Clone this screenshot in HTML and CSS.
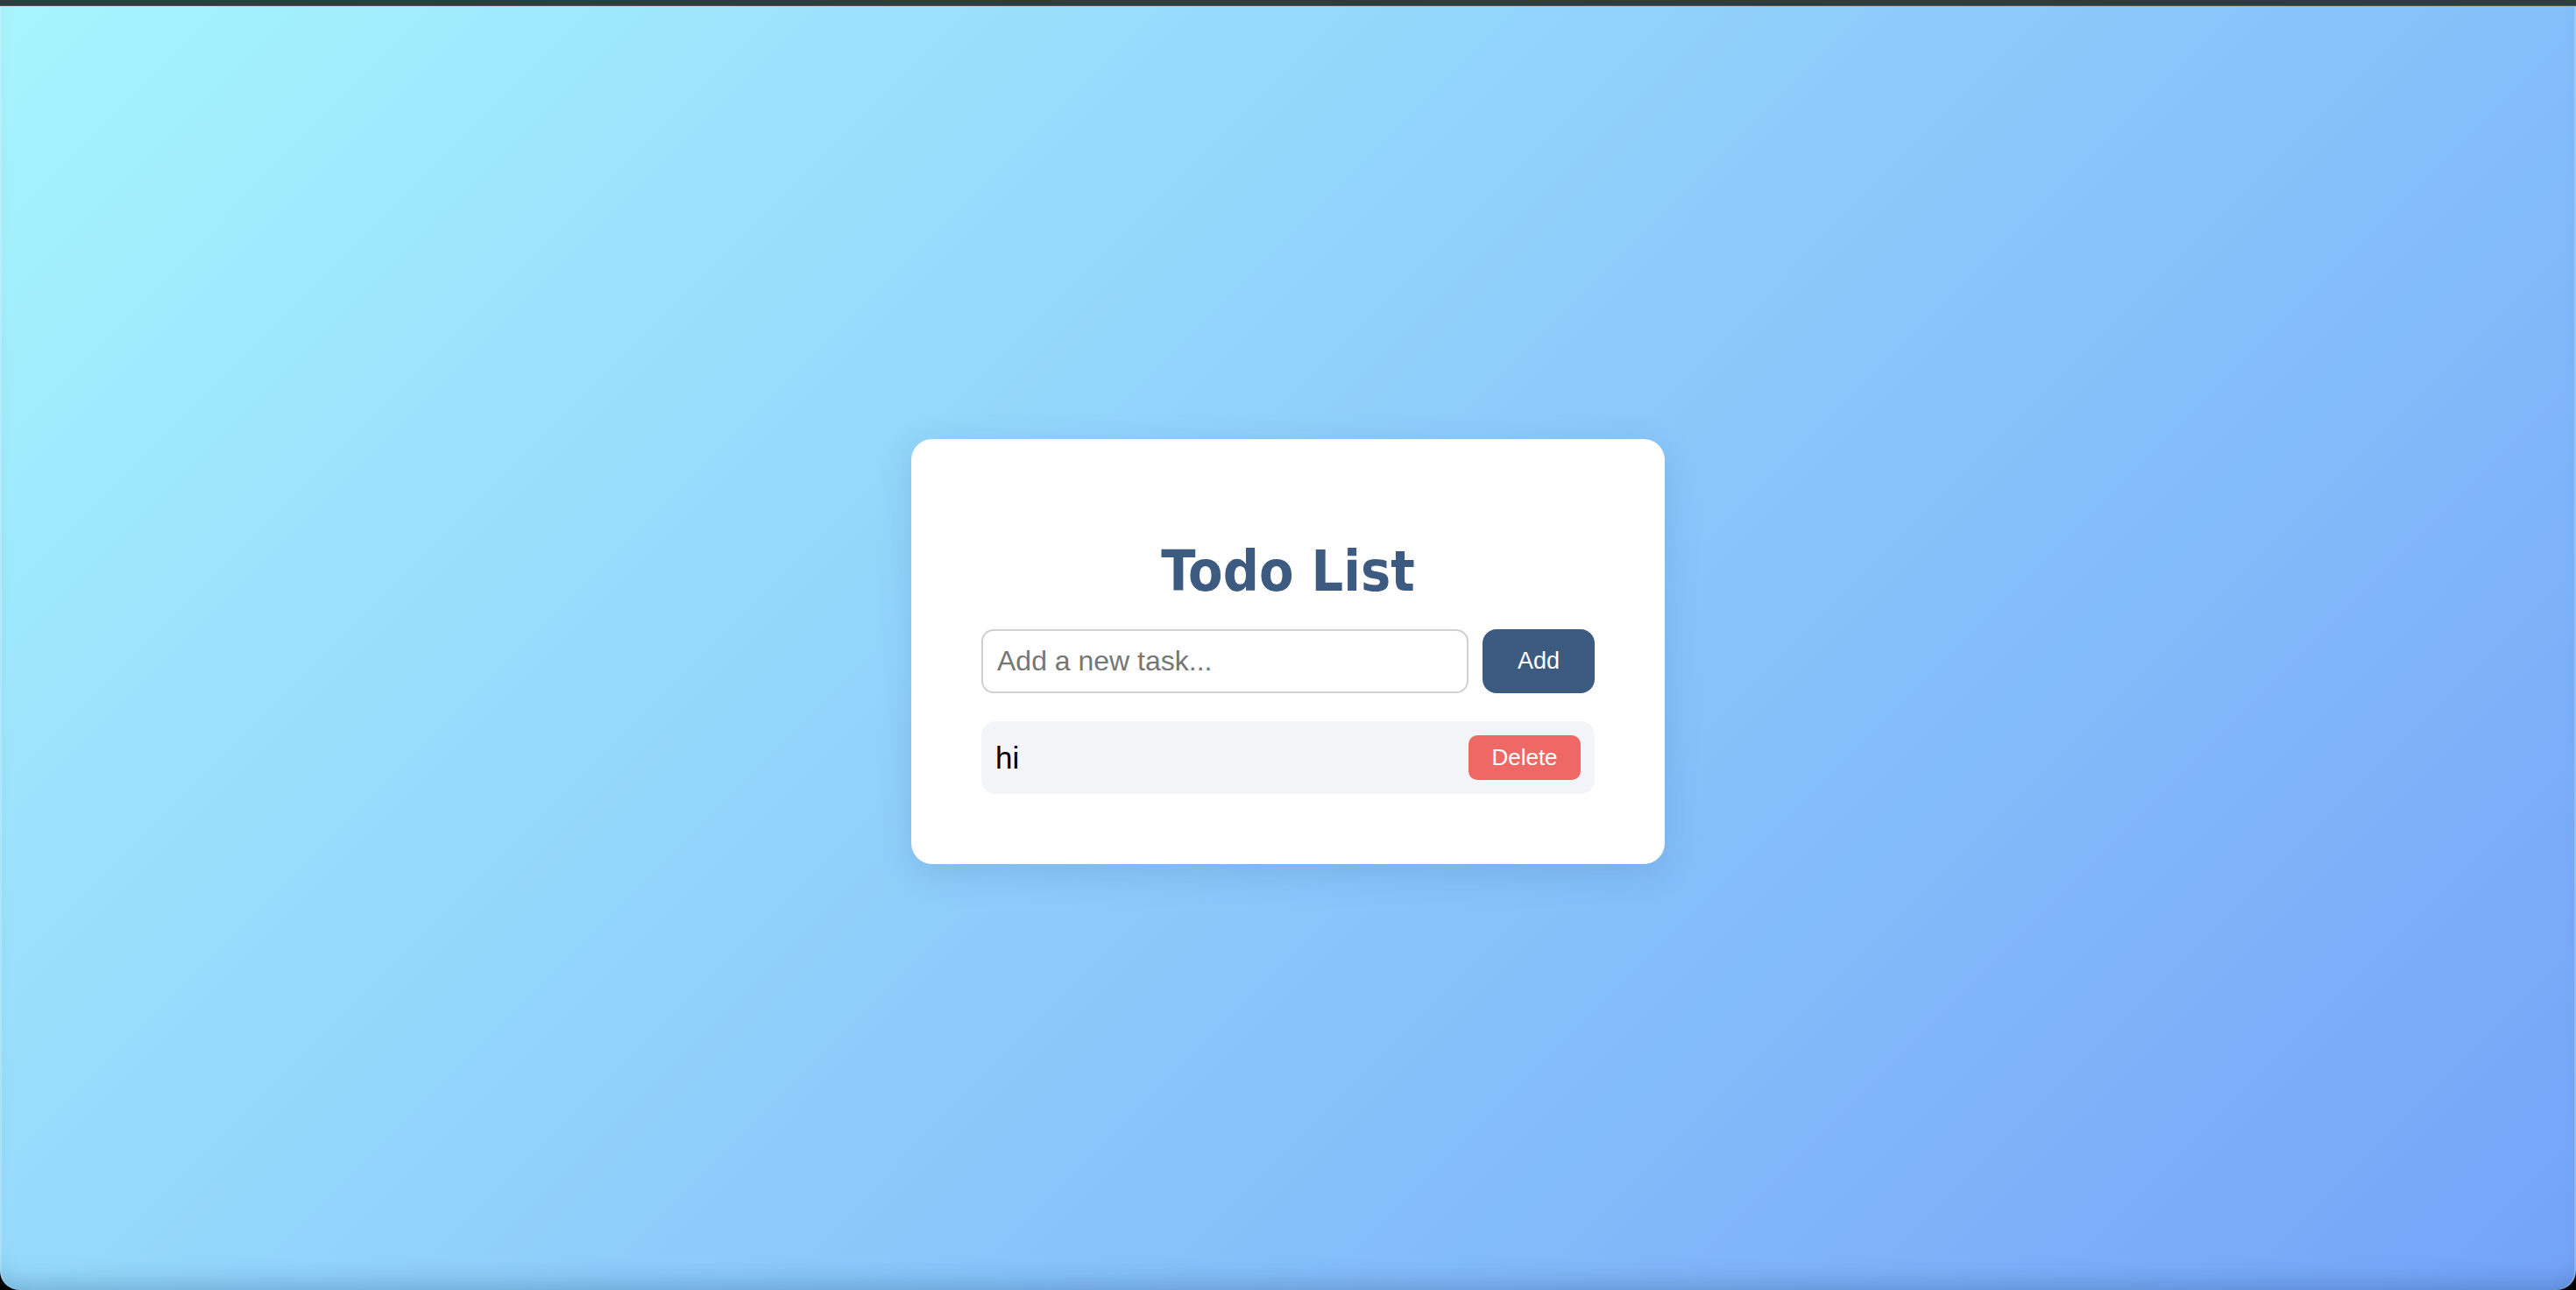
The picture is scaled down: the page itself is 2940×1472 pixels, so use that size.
FILE: index.html
```html
<!DOCTYPE html>
<html lang="en">
<head>
<meta charset="utf-8">
<title>Todo List</title>
<link rel="stylesheet" href="styles.css">
</head>
<body>
<div class="topbar"></div>
<main class="window">
  <section class="card">
    <h1 class="title">Todo List</h1>
    <form class="add-row" onsubmit="return false;">
      <input class="task-input" type="text" placeholder="Add a new task...">
      <button class="add-btn" type="submit">Add</button>
    </form>
    <ul class="task-list">
      <li class="task-item">
        <span class="task-text">hi</span>
        <button class="delete-btn" type="button">Delete</button>
      </li>
    </ul>
  </section>
</main>
</body>
</html>
```

FILE: styles.css
```css
html {
  background: #000;
}
body {
  margin: 0;
  height: 1472px;
  display: flex;
  flex-direction: column;
  font-family: "Liberation Sans", Arial, sans-serif;
  overflow: hidden;
}
.topbar {
  height: 6px;
  background: #2e3c3b;
  border-bottom: 1px solid #4b5757;
  flex: none;
}
.window {
  flex: 1;
  display: flex;
  align-items: center;
  justify-content: center;
  background: linear-gradient(135deg, #a6f5fd 0%, #74a3f8 100%);
  border-radius: 0 0 22px 22px;
  box-shadow: inset 0 -24px 28px -18px rgba(20, 60, 110, 0.28), inset 2px 0 0 rgba(255,255,255,0.25), inset -2px 0 0 rgba(255,255,255,0.25);
}
.card {
  width: 700px;
  padding: 80px;
  background: #fff;
  border-radius: 24px;
  box-shadow: 0 10px 40px rgba(30, 70, 130, 0.16);
  margin-top: 8px;
}
.title {
  margin: 33px 0 27px;
  height: 77px;
  line-height: 77px;
  text-align: center;
  color: #3d5a80;
  font-family: Tahoma, "DejaVu Sans", sans-serif;
  font-stretch: condensed;
  font-weight: bold;
  font-size: 64px;
}
.add-row {
  display: flex;
  gap: 16px;
  margin: 0 0 32px;
  height: 73px;
}
.task-input {
  flex: 1;
  box-sizing: border-box;
  height: 73px;
  padding: 0 16px;
  border: 2px solid #d0d0d0;
  border-radius: 14px;
  font-family: "Liberation Sans", Arial, sans-serif;
  font-size: 32px;
  color: #000;
  background: #fff;
  outline: none;
}
.task-input::placeholder {
  color: #767676;
}
.add-btn {
  width: 128px;
  height: 73px;
  border: none;
  border-radius: 16px;
  background: #3d5a80;
  color: #fff;
  font-family: "Liberation Sans", Arial, sans-serif;
  font-size: 27px;
  padding: 0;
}
.task-list {
  list-style: none;
  margin: 0;
  padding: 0;
}
.task-item {
  display: flex;
  align-items: center;
  justify-content: space-between;
  padding: 16px;
  background: #f4f5f9;
  border-radius: 16px;
}
.task-text {
  font-size: 35px;
  color: #000;
}
.delete-btn {
  width: 128px;
  height: 51px;
  border: none;
  border-radius: 10px;
  background: #ee6966;
  color: #fff;
  font-family: "Liberation Sans", Arial, sans-serif;
  font-size: 26px;
  padding: 0;
}
```
